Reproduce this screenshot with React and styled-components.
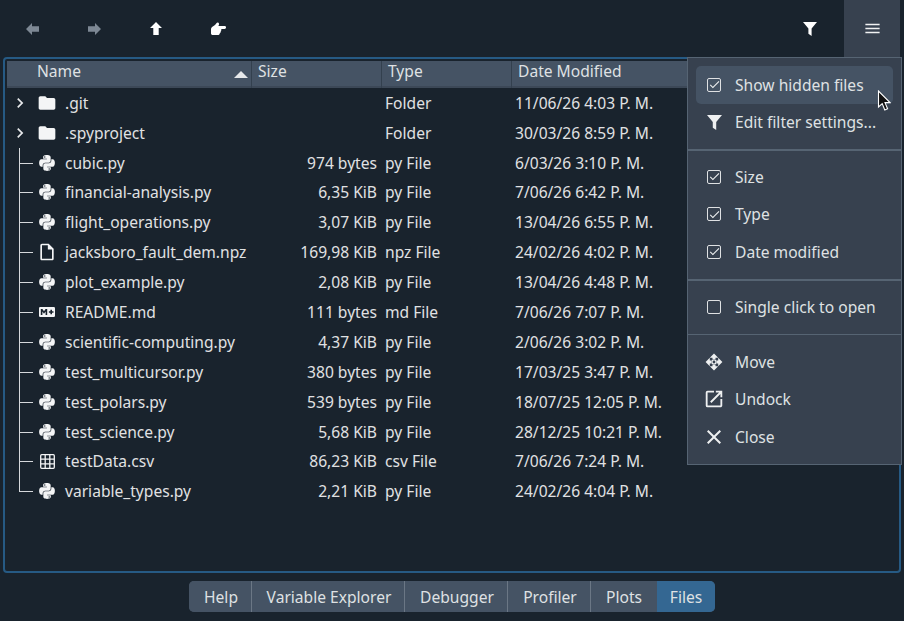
import React from "react";
import styled, { createGlobalStyle } from "styled-components";
import { FaPython } from "react-icons/fa";
import { MdFolder, MdOutlineInsertDriveFile, MdMenu, MdOpenInNew, MdClose, MdCheck, MdChevronRight } from "react-icons/md";

const Global = createGlobalStyle`
  html, body { margin: 0; padding: 0; background: #19232d; }
  * { box-sizing: border-box; }
`;

const Page = styled.div`
  position: relative;
  width: 904px;
  height: 621px;
  overflow: hidden;
  background: #19232d;
  color: #e0e1e3;
  font-family: "Noto Sans", sans-serif;
  font-size: 15.6px;
  display: flex;
  flex-direction: column;
`;

const Toolbar = styled.div`
  height: 57px;
  display: flex;
  align-items: stretch;
  padding: 0 4px 0 1px;
`;

const ToolButton = styled.div`
  width: 62px;
  display: flex;
  align-items: center;
  justify-content: center;
  color: ${(p) => (p.$dim ? "#7d8894" : "#ffffff")};
`;

const Spacer = styled.div`
  flex: 1;
`;

const FilterButton = styled(ToolButton)`
  width: 56px;
  margin-right: 6px;
`;

const MenuButton = styled(ToolButton)`
  width: 56px;
  background: #37414f;
  color: #f0f1f2;
`;

const Frame = styled.div`
  height: 516px;
  margin: 0 3px;
  padding: 2px 0 0 2px;
  border: 2px solid #265a84;
  border-radius: 4px;
`;

const Header = styled.div`
  display: grid;
  grid-template-columns: 245px 130px 130px 1fr;
  height: 27px;
  background: #455364;
  box-shadow: inset 0 -2px 0 #3c4857;
`;

const HeaderCell = styled.div`
  position: relative;
  padding-left: ${(p) => p.$pad || 6}px;
  line-height: 20px;
  color: #dfe1e3;
  border-right: 1px solid #33404e;
  &:last-child { border-right: 0; }
`;

const SortArrow = styled.span`
  position: absolute;
  right: 3px;
  top: 10px;
  width: 0;
  height: 0;
  border-left: 7px solid transparent;
  border-right: 7px solid transparent;
  border-bottom: 7px solid #e6e8ea;
`;

const List = styled.div`
  margin-left: -3px;
  margin-top: -0.2px;
`;

const Row = styled.div`
  display: grid;
  grid-template-columns: 248px 130px 130px 1fr;
  height: 29.9px;
  align-items: center;
  white-space: nowrap;
`;

const NameCell = styled.div`
  display: flex;
  align-items: center;
  height: 100%;
`;

const Guide = styled.div`
  position: relative;
  width: 29px;
  height: 100%;
  flex: none;
  color: #e6e8ea;
  display: flex;
  align-items: center;
  padding-left: 6px;
  ${(p) =>
    p.$branch
      ? `
    &::before {
      content: "";
      position: absolute;
      left: 15px;
      top: 0;
      width: 1px;
      height: ${p.$last ? "50%" : "100%"};
      background: #d5d8db;
    }
    &::after {
      content: "";
      position: absolute;
      left: 15px;
      top: 50%;
      width: 14px;
      height: 1px;
      background: #d5d8db;
    }`
      : ""}
`;

const IconSlot = styled.div`
  width: 18px;
  height: 18px;
  flex: none;
  margin-left: 5px;
  margin-right: 9px;
  display: flex;
  align-items: center;
  justify-content: center;
  color: #f4f5f6;
  svg { flex: none; }
`;

const SizeCell = styled.div`
  text-align: right;
  padding-right: 5px;
`;

const TypeCell = styled.div`
  padding-left: 3px;
`;

const DateCell = styled.div`
  padding-left: 3px;
`;

const TabArea = styled.div`
  flex: 1;
  display: flex;
  justify-content: center;
  padding-top: 8px;
`;

const TabBar = styled.div`
  display: flex;
  height: 31px;
  border-radius: 5px;
  overflow: hidden;
  background: #455364;
`;

const Tab = styled.div`
  width: ${(p) => p.$w}px;
  display: flex;
  align-items: center;
  justify-content: center;
  color: #dfe1e3;
  background: ${(p) => (p.$active ? "#346792" : "#455364")};
  border-right: ${(p) => (p.$sep ? "1px solid #6b7785" : "0")};
  padding-left: ${(p) => (p.$sep ? 2 : 0)}px;
`;

const Menu = styled.div`
  position: absolute;
  left: 687px;
  top: 57px;
  width: 215px;
  height: 408px;
  background: #37414f;
  border: 1px solid #566473;
  padding: 8px 0 0;
  display: flex;
  flex-direction: column;
`;

const MenuItem = styled.div`
  height: 37.5px;
  flex: none;
  margin: 0 8px;
  padding-left: 10px;
  display: flex;
  align-items: center;
  border-radius: 5px;
  color: #dfe1e3;
  background: ${(p) => (p.$hover ? "#455364" : "transparent")};
`;

const MenuIcon = styled.div`
  width: 18px;
  height: 18px;
  flex: none;
  margin-right: 12px;
  margin-left: -1px;
  display: flex;
  align-items: center;
  justify-content: center;
  color: #eef0f1;
  svg { flex: none; }
`;

const Check = styled.div`
  width: 14px;
  height: 14px;
  border: 1.4px solid #dfe1e3;
  border-radius: 2px;
  display: flex;
  align-items: center;
  justify-content: center;
  color: #eef0f1;
  svg { flex: none; }
`;

const Separator = styled.div`
  flex: none;
  height: ${(p) => (p.$thick ? 2 : 1)}px;
  background: #566473;
  margin: ${(p) => p.$before}px 0 ${(p) => p.$after}px;
`;

const Cursor = styled.svg`
  position: absolute;
  left: 877px;
  top: 90px;
`;

const ArrowLeft = () => (
  <svg width="13" height="12" viewBox="0 0 13 12" fill="currentColor">
    <path d="M0 6 6 0V3.3H13V8.7H6V12Z" />
  </svg>
);

const ArrowRight = () => (
  <svg width="13" height="12" viewBox="0 0 13 12" fill="currentColor">
    <path d="M13 6 7 0V3.3H0V8.7H7V12Z" />
  </svg>
);

const ArrowUp = () => (
  <svg width="12" height="13" viewBox="0 0 12 13" fill="currentColor">
    <path d="M6 0 12 6H8.7V13H3.3V6H0Z" />
  </svg>
);

const Hand = () => (
  <svg width="15" height="13" viewBox="0 0 15 13" fill="currentColor">
    <path d="M0 7.5V11.5C0 12.4 .8 13 1.6 13H6.8C8 13 8.8 12.2 8.8 11.2 9.6 10.8 10 10 9.8 9.2 10.4 8.7 10.6 7.8 10.2 7H13.6C15.5 7 15.5 4 13.6 4H7.4L8 2.4C8.5 .8 6.4 -.4 5.6 1 4.7 2.6 3.4 3.6 1.8 4.6 .7 5.3 0 6.2 0 7.5Z" />
  </svg>
);

const Funnel = ({ size }) => (
  <svg width={size} height={size} viewBox="0 0 14 14" fill="currentColor">
    <path d="M0 0H14L8.6 6.6V14L5.4 11.8V6.6Z" />
  </svg>
);

const Markdown = () => (
  <svg width="16" height="10" viewBox="0 0 16 10">
    <rect width="16" height="10" rx="1.2" fill="#f4f5f6" />
    <path d="M1.8 8V2H3.4L5 4.2 6.6 2H8.2V8H6.6V4.6L5 6.7 3.4 4.6V8Z" fill="#19232d" />
    <path d="M11.4 2.8H13V4.3H14.5V5.8H13V7.3H11.4V5.8H9.9V4.3H11.4Z" fill="#19232d" />
  </svg>
);

const Grid = () => (
  <svg width="15" height="15" viewBox="0 0 15 15" fill="none" stroke="#f4f5f6" strokeWidth="1.3">
    <rect x=".7" y=".7" width="13.6" height="13.6" rx="1" />
    <path d="M.7 5.2H14.3M.7 9.8H14.3M5.2 .7V14.3M9.8 .7V14.3" />
  </svg>
);

const Move = () => (
  <svg width="18" height="18" viewBox="0 0 18 18" fill="#eef0f1">
    <path d="M9 .6 13.2 4.8H10.5V6H7.5V4.8H4.8ZM9 17.4 4.8 13.2H7.5V12H10.5V13.2H13.2ZM.6 9 4.8 4.8V7.5H6V10.5H4.8V13.2ZM17.4 9 13.2 13.2V10.5H12V7.5H13.2V4.8Z" />
    <circle cx="9" cy="9" r="2.1" fill="#37414f" stroke="#eef0f1" strokeWidth="1.4" />
  </svg>
);

const files = [
  [".git", "folder", "", "Folder", "11/06/26 4:03 P. M."],
  [".spyproject", "folder", "", "Folder", "30/03/26 8:59 P. M."],
  ["cubic.py", "py", "974 bytes", "py File", "6/03/26 3:10 P. M."],
  ["financial-analysis.py", "py", "6,35 KiB", "py File", "7/06/26 6:42 P. M."],
  ["flight_operations.py", "py", "3,07 KiB", "py File", "13/04/26 6:55 P. M."],
  ["jacksboro_fault_dem.npz", "file", "169,98 KiB", "npz File", "24/02/26 4:02 P. M."],
  ["plot_example.py", "py", "2,08 KiB", "py File", "13/04/26 4:48 P. M."],
  ["README.md", "md", "111 bytes", "md File", "7/06/26 7:07 P. M."],
  ["scientific-computing.py", "py", "4,37 KiB", "py File", "2/06/26 3:02 P. M."],
  ["test_multicursor.py", "py", "380 bytes", "py File", "17/03/25 3:47 P. M."],
  ["test_polars.py", "py", "539 bytes", "py File", "18/07/25 12:05 P. M."],
  ["test_science.py", "py", "5,68 KiB", "py File", "28/12/25 10:21 P. M."],
  ["testData.csv", "csv", "86,23 KiB", "csv File", "7/06/26 7:24 P. M."],
  ["variable_types.py", "py", "2,21 KiB", "py File", "24/02/26 4:04 P. M."],
];

const fileIcon = (kind) => {
  if (kind === "folder") return <MdFolder size={20} />;
  if (kind === "py") return <FaPython size={18} />;
  if (kind === "file") return <MdOutlineInsertDriveFile size={20} />;
  if (kind === "md") return <Markdown />;
  return <Grid />;
};

const tabs = [
  ["Help", 63, true],
  ["Variable Explorer", 153, true],
  ["Debugger", 103, true],
  ["Profiler", 83, true],
  ["Plots", 66, false],
  ["Files", 58, false, true],
];

const Checked = () => (
  <Check>
    <MdCheck size={13} />
  </Check>
);

export default function App() {
  return (
    <Page>
      <Global />
      <Toolbar>
        <ToolButton $dim><ArrowLeft /></ToolButton>
        <ToolButton $dim><ArrowRight /></ToolButton>
        <ToolButton><ArrowUp /></ToolButton>
        <ToolButton><Hand /></ToolButton>
        <Spacer />
        <FilterButton><Funnel size={14} /></FilterButton>
        <MenuButton><MdMenu size={19} /></MenuButton>
      </Toolbar>
      <Frame>
        <Header>
          <HeaderCell $pad={30}>Name<SortArrow /></HeaderCell>
          <HeaderCell>Size</HeaderCell>
          <HeaderCell>Type</HeaderCell>
          <HeaderCell>Date Modified</HeaderCell>
        </Header>
        <List>
          {files.map(([name, kind, size, type, date], i) => (
            <Row key={name}>
              <NameCell>
                <Guide $branch={kind !== "folder"} $last={i === files.length - 1}>
                  {kind === "folder" && <MdChevronRight size={20} />}
                </Guide>
                <IconSlot>{fileIcon(kind)}</IconSlot>
                <span>{name}</span>
              </NameCell>
              <SizeCell>{size}</SizeCell>
              <TypeCell>{type}</TypeCell>
              <DateCell>{date}</DateCell>
            </Row>
          ))}
        </List>
      </Frame>
      <TabArea>
        <TabBar>
          {tabs.map(([label, w, sep, active]) => (
            <Tab key={label} $w={w} $sep={sep} $active={active}>{label}</Tab>
          ))}
        </TabBar>
      </TabArea>
      <Menu>
        <MenuItem $hover><MenuIcon><Checked /></MenuIcon>Show hidden files</MenuItem>
        <MenuItem><MenuIcon><Funnel size={15} /></MenuIcon>Edit filter settings...</MenuItem>
        <Separator $thick $before={8} $after={7} />
        <MenuItem><MenuIcon><Checked /></MenuIcon>Size</MenuItem>
        <MenuItem><MenuIcon><Checked /></MenuIcon>Type</MenuItem>
        <MenuItem><MenuIcon><Checked /></MenuIcon>Date modified</MenuItem>
        <Separator $thick $before={8} $after={8} />
        <MenuItem><MenuIcon><Check /></MenuIcon>Single click to open</MenuItem>
        <Separator $before={8} $after={8} />
        <MenuItem><MenuIcon><Move /></MenuIcon>Move</MenuItem>
        <MenuItem><MenuIcon><MdOpenInNew size={22} /></MenuIcon>Undock</MenuItem>
        <MenuItem><MenuIcon><MdClose size={24} /></MenuIcon>Close</MenuItem>
      </Menu>
      <Cursor width="14" height="22" viewBox="0 0 14 22">
        <path d="M1.5 1V17L5.2 13.6 7.8 20 10.6 18.8 8 12.6H13Z" fill="#111" stroke="#fff" strokeWidth="1.1" />
      </Cursor>
    </Page>
  );
}
